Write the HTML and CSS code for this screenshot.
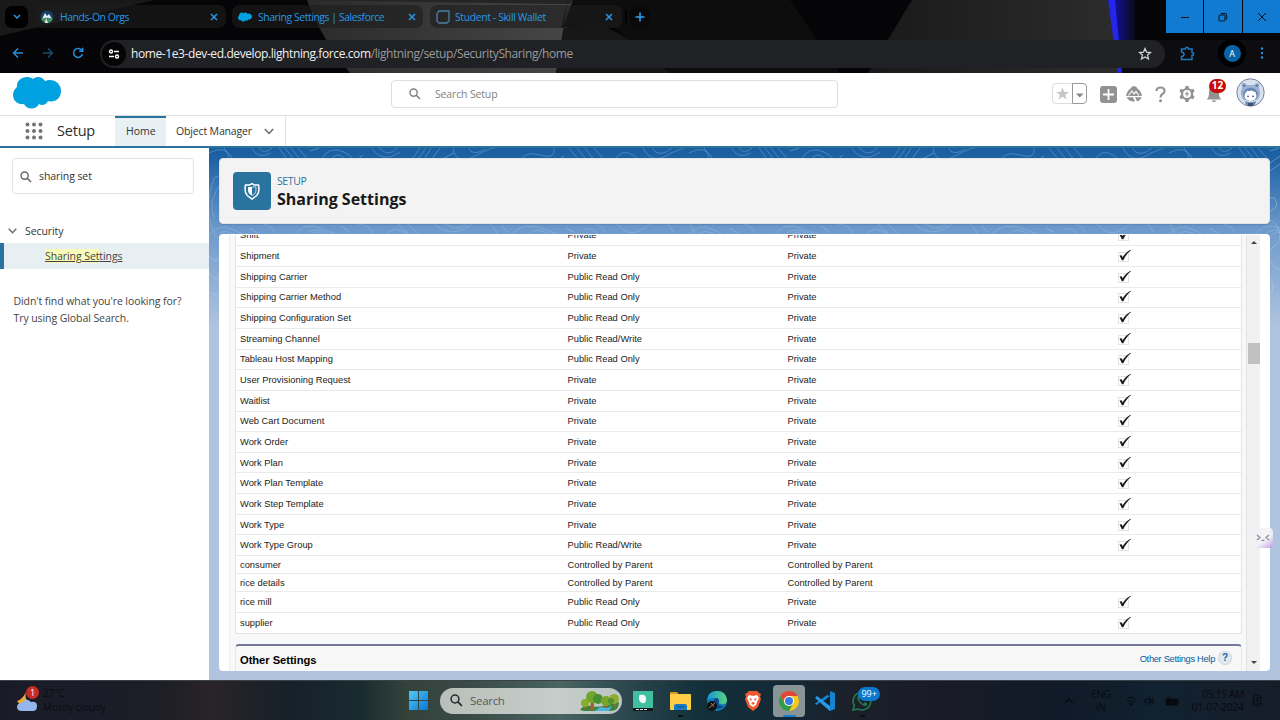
FILE: index.html
```html
<!DOCTYPE html>
<html lang="en">
<head>
<meta charset="utf-8">
<title>Sharing Settings | Salesforce</title>
<link rel="stylesheet" href="styles.css">
</head>
<body>
<svg class="defs" width="0" height="0">
  <symbol id="check" viewBox="0 0 16 16"><path d="M2.500 4.500V13.500H12.500V4.500Z" fill="none" stroke="#c9c9c9" stroke-dasharray="1 1"/><path d="M3.500 7.600L5.600 7.200L6.700 9.200C8.600 6 11 3.300 14.600 1.700L15 2.300C12 4.500 9.500 7.800 7.300 12.200L5.900 12.200Z" fill="#1c1c1c"/></symbol>
  <symbol id="cloud" viewBox="0 0 48 33"><path d="M4 11C3 3 13-2 20 3C23 0 29 0 32 5C40 2 48 7 48 15C48 23 41 27 35 25C33 29 29 30 26 28C23 34 14 34 11 28C4 29 0 24 0 19C0 15 2 13 4 11Z" fill="#00a1e0"/></symbol>
  <symbol id="x" viewBox="0 0 8 8"><path d="M1 1L7 7M7 1L1 7" fill="none" stroke="#2698e8" stroke-width="1.500"/></symbol>
  <symbol id="lens" viewBox="0 0 12 12"><circle cx="4.600" cy="4.600" r="3.600" fill="none" stroke="currentColor" stroke-width="1.400"/><path d="M7.300 7.300L11 11" stroke="currentColor" stroke-width="1.600"/></symbol>
</svg>

<header class="chrome">
  <svg class="chrome-art" width="1280" height="73" viewBox="0 0 1280 73">
    <defs><linearGradient id="gl"><stop offset="0" stop-color="#1010b0"/><stop offset="1" stop-color="#0c0a14"/></linearGradient>
    <linearGradient id="gm"><stop offset="0" stop-color="#2b2b2c"/><stop offset="1" stop-color="#464646"/></linearGradient>
    <linearGradient id="gr"><stop offset="0" stop-color="#191919"/><stop offset="1" stop-color="#2c2c2c"/></linearGradient></defs>
    <path d="M0 0H155L95 14L0 36Z" fill="#19191a"/>
    <path d="M307 0H573L556 73H350Q322 40 307 0Z" fill="url(#gm)"/>
    <path d="M307 0H573L570 4Q420 2 307 0Z" fill="#242425"/>
    <path d="M568 0L561 28L608 28L640 45L672 73H556Z" fill="#171718"/>
    <path d="M573 0H790L840 73H670L615 28L563 27Z" fill="#0d0d0e"/>
    <path d="M912 0H1108L1120 73H868L889 38Z" fill="url(#gr)"/>
    <path d="M1112 0H1135V40H1118Z" fill="url(#gl)"/>
    <path d="M1120 40H1280V73H1122Z" fill="#0d0c10"/>
    <path d="M1108 0H1115L1122 73H1118Z" fill="#2626ea"/>
  </svg>
  <div class="tabs">
    <div class="tab-menu"><svg width="8" height="6" viewBox="0 0 8 6"><path d="M1 1L4 4L7 1" fill="none" stroke="#2698e8" stroke-width="1.500"/></svg></div>
    <div class="tab tab-a">
      <svg class="fav" width="14" height="14" viewBox="0 0 14 14"><circle cx="7" cy="7" r="6.500" fill="#163f68"/><path d="M2 9L5 3L7 6L9 4L12 9Z" fill="#e8eff8"/><path d="M1 9Q7 6 13 9Q11 13 7 13T1 9" fill="#438a5e"/><path d="M6 8L8 13H5Z" fill="#efe9dc"/></svg>
      <span class="t1">Hands-On Orgs</span><svg class="close" width="8" height="8"><use href="#x"/></svg></div>
    <div class="tab tab-b"><svg class="fav" width="14" height="10"><use href="#cloud"/></svg><span class="t2">Sharing Settings | Salesforce</span><svg class="close" width="8" height="8"><use href="#x"/></svg></div>
    <div class="tab tab-c"><svg class="fav" width="14" height="14" viewBox="0 0 14 14"><path d="M3 1H13V11L11 13H3L1 11V4Z" fill="none" stroke="#4882a0" stroke-width="1.300"/><path d="M1 4V11L3 13" stroke="#665191" stroke-width="1.500" stroke-dasharray="2 1" fill="none"/></svg><span class="t3">Student - Skill Wallet</span><svg class="close" width="8" height="8"><use href="#x"/></svg></div>
    <div class="tab-sep"></div>
    <div class="new-tab"><svg width="10" height="10" viewBox="0 0 10 10"><path d="M5 .5V9.500M.5 5H9.500" stroke="#2aa0f4" stroke-width="1.600"/></svg></div>
    <div class="win-buttons">
      <div><svg width="10" height="10"><path d="M1 5.500H9" stroke="#06131d"/></svg></div>
      <div><svg width="10" height="10" viewBox="0 0 10 10" fill="none" stroke="#06131d"><rect x="1" y="3" width="6" height="6" rx="1"/><path d="M3 1.500H7Q8.700 1.500 8.700 3V7.500"/></svg></div>
      <div><svg width="10" height="10" viewBox="0 0 10 10"><path d="M1 1L9 9M9 1L1 9" stroke="#06131d"/></svg></div>
    </div>
  </div>
  <div class="toolbar">
    <svg width="12" height="12" viewBox="0 0 12 12" fill="none" stroke="#2590dc" stroke-width="1.400"><path d="M11 6H1.500M6 1.500L1.500 6L6 10.500"/></svg>
    <svg width="12" height="12" viewBox="0 0 12 12" fill="none" stroke="#174b70" stroke-width="1.400"><path d="M1 6H10.500M6 1.500L10.500 6L6 10.500"/></svg>
    <svg width="12" height="12" viewBox="0 0 12 12" fill="none" stroke="#2590dc" stroke-width="1.500"><path d="M10 3.600A4.500 4.500 0 1 0 10.500 7M10.700 .7V4.200H7.200"/></svg>
    <div class="omni">
      <div class="site-info"><svg width="12" height="10" viewBox="0 0 12 10" fill="none" stroke="#fff" stroke-width="1.400"><circle cx="3" cy="2.500" r="1.500"/><path d="M6 2.500H11M1 7.500H6"/><circle cx="9" cy="7.500" r="1.500"/></svg></div>
      <span class="url"><b>home-1e3-dev-ed.develop.lightning.force.com</b>/lightning/setup/SecuritySharing/home</span>
      <svg class="bookmark" width="14" height="14" viewBox="0 0 14 14"><path d="M7 1.600L8.600 5.200L12.500 5.500L9.600 8.100L10.500 12L7 9.900L3.500 12L4.400 8.100L1.500 5.500L5.400 5.200Z" fill="none" stroke="#d2d3d6" stroke-width="1.300"/></svg>
    </div>
    <svg class="puzzle" width="15" height="15" viewBox="0 0 15 15"><path d="M1.500 3H5.500Q5.500 1.300 7 1.300T8.500 3H12V6.500Q13.700 6.500 13.700 8T12 9.500V13.500H1.500V10.500Q4 10.300 4 8.300T1.500 6Z" fill="none" stroke="#1e79bd" stroke-width="1.500"/></svg>
    <div class="profile"><span>A</span></div>
    <svg class="kebab" width="4" height="12" fill="#2590dc"><circle cx="2" cy="1.500" r="1.200"/><circle cx="2" cy="6" r="1.200"/><circle cx="2" cy="10.500" r="1.200"/></svg>
  </div>
</header>

<div class="sf-header">
  <svg class="sf-logo" width="48" height="33"><use href="#cloud"/></svg>
  <div class="global-search"><svg width="12" height="12"><use href="#lens"/></svg><span>Search Setup</span></div>
  <div class="actions">
    <svg width="36" height="22" viewBox="0 0 36 22"><path d="M21 .5H4Q.5 .5 .5 4V17Q.5 20.500 4 20.500H21" fill="#fff" stroke="#ddd"/><path d="M10.500 4.500L12.200 9H17L13.200 11.800L14.600 16.500L10.500 13.700L6.400 16.500L7.800 11.800L4 9H8.800Z" fill="#c6c6c6"/><path d="M20.500 .5H31Q34.500 .5 34.500 4V17Q34.500 20.500 31 20.500H20.500Z" fill="#fff" stroke="#999"/><path d="M24 10.500H31.500L27.700 14.500Z" fill="#858585"/></svg>
    <svg class="i-plus" width="17" height="17" viewBox="0 0 17 17"><rect width="17" height="17" rx="3" fill="#929292"/><path d="M8.500 3V14M3 8.500H14" stroke="#fff" stroke-width="1.800"/></svg>
    <svg class="i-trail" width="16" height="16" viewBox="0 0 16 16"><path d="M0 10Q1 5 4 3Q6 0 8 0T12 3Q15 5 16 10Z" fill="#929292"/><path d="M2.500 9.500L6 5L8 8L10 5.500L13 9.500" fill="none" stroke="#fff" stroke-width="1.100"/><path d="M.5 11.300H7L9 15.500Q3 16 .5 11.300M9 11.300H15.500Q14 15 11 15.300Z" fill="#929292"/></svg>
    <svg class="i-help" width="11" height="17" viewBox="0 0 11 17"><path d="M1.500 5Q1.500 1.500 5.500 1.500T9.500 5Q9.500 7 7.500 8T5.500 11.500" fill="none" stroke="#929292" stroke-width="2.200"/><circle cx="5.500" cy="14.800" r="1.500" fill="#929292"/></svg>
    <svg class="i-gear" width="16" height="16" viewBox="0 0 16 16"><path d="M6.500 0H9.500L10 2.300L12 3.400L14.200 2.700L15.500 5.200L14 7V9L15.500 10.800L14.200 13.300L12 12.600L10 13.700L9.500 16H6.500L6 13.700L4 12.600L1.800 13.300L.5 10.800L2 9V7L.5 5.200L1.800 2.700L4 3.400L6 2.300Z" fill="#929292"/><circle cx="8" cy="8" r="3.900" fill="#fff"/><path d="M8.500 4.800L5.800 8.500H7.600L7 11.200L10.200 7.300H8.300Z" fill="#929292"/></svg>
    <div class="bell"><svg width="16" height="17" viewBox="0 0 16 17"><path d="M2 12Q3 10 3 6Q3 1 8 1T13 6Q13 10 14 12L15.500 13.500H.5ZM5.500 14.500H10.500Q8 18 5.500 14.500" fill="#929292"/></svg><span>12</span></div>
    <svg class="avatar" width="29" height="29" viewBox="0 0 29 29"><circle cx="14.500" cy="14.500" r="13.700" fill="#d8e2ef" stroke="#74849a"/><path d="M5.500 5.500Q8 3.500 11 7H18Q21 3.500 23.500 5.500L23 10Q26 16 21.500 22H7.500Q3 16 6 10Z" fill="#9db2d1"/><path d="M7 6.500L10 7.500L7.500 9ZM22 6.500L19 7.500L21.500 9Z" fill="#4b658b"/><ellipse cx="14.500" cy="16.500" rx="7.400" ry="6.800" fill="#6785b2"/><ellipse cx="14.500" cy="18" rx="6" ry="5" fill="#fff"/><path d="M9.500 15L11.500 12.500L13.500 13.500L15.500 12.200L17 13.500L19.500 14L20 17H9Z" fill="#fff"/><circle cx="12" cy="18.400" r=".8" fill="#31425c"/><circle cx="17" cy="18.400" r=".8" fill="#31425c"/><path d="M9 23Q14.500 25.500 20 23L19 27Q14.500 29 10 27Z" fill="#7189ab"/><path d="M12 25H17V28H12Z" fill="#3d5375"/></svg>
  </div>
</div>

<nav class="sf-nav">
  <svg class="waffle" width="18" height="18" fill="#747474"><circle cx="2.500" cy="2.500" r="2"/><circle cx="9" cy="2.500" r="2"/><circle cx="15.500" cy="2.500" r="2"/><circle cx="2.500" cy="9" r="2"/><circle cx="9" cy="9" r="2"/><circle cx="15.500" cy="9" r="2"/><circle cx="2.500" cy="15.500" r="2"/><circle cx="9" cy="15.500" r="2"/><circle cx="15.500" cy="15.500" r="2"/></svg>
  <span class="app-name">Setup</span>
  <div class="nav-home"><span>Home</span></div>
  <div class="nav-object"><span>Object Manager</span><svg width="10" height="7" viewBox="0 0 10 7"><path d="M.8 1L5 5.500L9.200 1" fill="none" stroke="#6b6b6b" stroke-width="1.500"/></svg></div>
</nav>

<div class="body">
  <aside class="side">
    <div class="quick-find"><svg width="12" height="12"><use href="#lens"/></svg><span>sharing set</span></div>
    <div class="tree-group"><svg width="9" height="6" viewBox="0 0 9 6"><path d="M.7 .8L4.500 4.800L8.300 .8" fill="none" stroke="#6b6b6b" stroke-width="1.400"/></svg><span>Security</span></div>
    <div class="tree-item"><span><mark>Sharing Set</mark>tings</span></div>
    <p class="hint"><span class="h1">Didn't find what you're looking for?</span><br><span class="h2">Try using Global Search.</span></p>
  </aside>
  <main class="main">
    <svg class="topo" width="1071" height="532" viewBox="0 0 1071 532">
      <defs><pattern id="contours" width="480" height="532" patternUnits="userSpaceOnUse"><g fill="none" stroke="#a9cbee" stroke-opacity=".36" stroke-width=".9">
        <path d="M0 5Q15-3 22 8T5 30Q-5 60 3 80T20 100M15 0Q28 15 13 34T5 70M43 0Q48 12 62 5M50 0Q55 7 63 0M70 0L84 20M76 0L90 18M82 0L96 18M89 0L101 14"/>
        <path d="M112 12Q120-3 135 4T140 18M121 14Q127 2 135 10M163 0Q173 16 191 4M170 0Q180 10 188 0M197 20L211 0M203 20L217 0M210 20L222 0M218 18L231 0"/>
        <path d="M244 0Q247 18 266 8T287 0M260 0Q263 9 276 1M309 16Q315 2 331 7T345 0M323 15Q327 8 336 14M360 0L373 16M368 0L380 15M376 0L388 16M385 0L396 13"/>
        <path d="M406 12Q412 0 424 7T422 18M434 0Q443 18 462 5L475 0M443 0Q450 11 463 0"/>
        <path d="M0 87Q10 74 25 82T38 85M10 86Q17 80 27 88M53 75Q66 79 66 88M85 88Q95 73 111 80T128 86M94 88Q105 76 120 87M102 88Q108 80 114 88M147 76Q160 75 165 88M175 88Q184 76 199 86M189 76L201 87M198 75L210 87"/>
        <path d="M225 76Q242 91 260 78T289 87M236 76Q249 84 257 76M303 86Q315 73 335 81T354 87M320 86Q328 78 341 87M369 76Q390 71 397 85M374 82Q386 78 389 88M408 76Q421 92 438 78T464 84"/>
      </g><path d="M101 3L110 0M148 12L154 7M233 11L245 5M345 15L355 8M465 17L475 10M40 80L49 85M132 78L140 84M292 78L299 84M357 80L365 84" stroke="#a9cbee" stroke-opacity=".4"/></pattern></defs>
      <rect width="1071" height="90" fill="url(#contours)"/>
      <g fill="none" stroke="#c5dcf3" stroke-opacity=".35"><path d="M1061 15L1071 8M1061 23L1071 16M1061 50H1065Q1071 57 1064 62L1061 63M1061 72Q1072 77 1071 93L1061 102M1061 112Q1069 125 1071 120M1061 130Q1067 140 1061 146M0 108Q7 115 10 111M0 125Q7 135 10 128M0 144L10 149"/></g>
    </svg>
    <section class="page-head">
      <div class="head-icon"><svg width="18" height="18" viewBox="0 0 18 18"><path d="M9 1.700L11.300 3H15.500Q17 10 13.800 13.500L9 17L4.200 13.500Q1 10 2.500 3H6.700Z" fill="none" stroke="#fff" stroke-width="1.500"/><path d="M9 5H5Q4.500 10 6.500 12L9 13.700Z" fill="#fff"/><path d="M9 5H13Q13.500 10 11.500 12L9 13.700" fill="none" stroke="#fff" stroke-width=".7"/></svg></div>
      <div class="head-text"><div class="eyebrow"><span>SETUP</span></div><h1><span>Sharing Settings</span></h1></div>
    </section>
    <section class="frame">
      <div class="sheet">
        <div class="table">
          <div class="row"><span>Shift</span><span>Private</span><span>Private</span><svg><use href="#check"/></svg></div>
          <div class="row"><span>Shipment</span><span>Private</span><span>Private</span><svg><use href="#check"/></svg></div>
          <div class="row"><span>Shipping Carrier</span><span>Public Read Only</span><span>Private</span><svg><use href="#check"/></svg></div>
          <div class="row"><span>Shipping Carrier Method</span><span>Public Read Only</span><span>Private</span><svg><use href="#check"/></svg></div>
          <div class="row"><span>Shipping Configuration Set</span><span>Public Read Only</span><span>Private</span><svg><use href="#check"/></svg></div>
          <div class="row"><span>Streaming Channel</span><span>Public Read/Write</span><span>Private</span><svg><use href="#check"/></svg></div>
          <div class="row"><span>Tableau Host Mapping</span><span>Public Read Only</span><span>Private</span><svg><use href="#check"/></svg></div>
          <div class="row"><span>User Provisioning Request</span><span>Private</span><span>Private</span><svg><use href="#check"/></svg></div>
          <div class="row"><span>Waitlist</span><span>Private</span><span>Private</span><svg><use href="#check"/></svg></div>
          <div class="row"><span>Web Cart Document</span><span>Private</span><span>Private</span><svg><use href="#check"/></svg></div>
          <div class="row"><span>Work Order</span><span>Private</span><span>Private</span><svg><use href="#check"/></svg></div>
          <div class="row"><span>Work Plan</span><span>Private</span><span>Private</span><svg><use href="#check"/></svg></div>
          <div class="row"><span>Work Plan Template</span><span>Private</span><span>Private</span><svg><use href="#check"/></svg></div>
          <div class="row"><span>Work Step Template</span><span>Private</span><span>Private</span><svg><use href="#check"/></svg></div>
          <div class="row"><span>Work Type</span><span>Private</span><span>Private</span><svg><use href="#check"/></svg></div>
          <div class="row"><span>Work Type Group</span><span>Public Read/Write</span><span>Private</span><svg><use href="#check"/></svg></div>
          <div class="row short"><span>consumer</span><span>Controlled by Parent</span><span>Controlled by Parent</span></div>
          <div class="row short"><span>rice details</span><span>Controlled by Parent</span><span>Controlled by Parent</span></div>
          <div class="row"><span>rice mill</span><span>Public Read Only</span><span>Private</span><svg><use href="#check"/></svg></div>
          <div class="row"><span>supplier</span><span>Public Read Only</span><span>Private</span><svg><use href="#check"/></svg></div>
        </div>
        <div class="other"><h2>Other Settings</h2><span class="help">Other Settings Help</span><span class="help-badge">?</span></div>
      </div>
      <div class="scrollbar"><i class="up"></i><i class="thumb"></i><i class="down"></i></div>
    </section>
    <div class="widget"><svg width="14" height="8" viewBox="0 0 14 8" fill="none" stroke="#858292" stroke-width="1.300"><path d="M1 1L4 3.500L1 6M13 1L10 3.500L13 6M5.500 6Q7 7 8.500 6"/></svg></div>
  </main>
</div>

<footer class="taskbar">
  <div class="weather">
    <div class="w-icon"><svg width="21" height="22" viewBox="0 0 21 22"><path d="M9 1Q5 9 0 10Q5 18 12 11Q7 8 9 1" fill="#efaa3b"/><path d="M5 20Q0 20 0 16T5 12Q9 6 14 11Q20 10 20 15T16 20Z" fill="#93b7ed"/></svg><span>1</span></div>
    <div class="w-text"><div><span>27°C</span></div><div><span class="cloudy">Mostly cloudy</span></div></div>
  </div>
  <svg class="start" width="19" height="19" viewBox="0 0 19 19"><defs><linearGradient id="win" x2="1" y2="1"><stop stop-color="#51c8f5"/><stop offset="1" stop-color="#0878d5"/></linearGradient></defs><path d="M0 0H9V9H0ZM10 0H19V9H10ZM0 10H9V19H0ZM10 10H19V19H10Z" fill="url(#win)"/></svg>
  <div class="task-search"><svg width="13" height="13"><use href="#lens"/></svg><span>Search</span>
    <svg class="trees" width="40" height="20" viewBox="0 0 40 20"><path d="M0 19Q4 13 11 15T27 14L39 11Q39 20 30 20H4Z" fill="#3b843d"/><path d="M15 20L20 16L27 17L32 15L29 20Z" fill="#49b5de"/><path d="M11 9L10 19H14V9M23 11L25 17H28V9M34 9V16H36V9M4 12V18H6V12" fill="#99652d"/><circle cx="12" cy="6" r="6" fill="#70a52b"/><circle cx="18" cy="8" r="5" fill="#499032"/><circle cx="5" cy="12" r="4" fill="#8bad2c"/><circle cx="26" cy="10" r="5" fill="#79a62a"/><circle cx="34" cy="8" r="5" fill="#8fac31"/><circle cx="31" cy="10" r="3" fill="#4d9230"/></svg></div>
  <div class="apps">
    <svg viewBox="0 0 20 20" width="20" height="20"><path d="M0 0H20V17H0Z" fill="#40bfa0"/><path d="M0 17H20V20H0Z" fill="#101818"/><path d="M8 4Q13 3 13 8T9 12Q6 11 6 7T8 4" fill="#f4faf8"/><path d="M3 18.500H15" stroke="#ddd" stroke-dasharray="3 1"/></svg>
    <div class="app"><svg viewBox="0 0 21 20" width="21" height="20"><path d="M0 2Q0 1 1 1H7L9 4H0Z" fill="#d89b20"/><rect y="3" width="21" height="16" rx="1" fill="#fdcd45"/><path d="M4 19V15Q4 13 6 13H15Q17 13 17 15V19Z" fill="#1879c4"/><path d="M7 16H14" stroke="#0d4f87"/></svg><i></i></div>
    <svg viewBox="0 0 20 20" width="20" height="20"><defs><linearGradient id="edge"><stop stop-color="#1793dc"/><stop offset="1" stop-color="#59d777"/></linearGradient></defs><circle cx="10" cy="10" r="10" fill="#137bbd"/><path d="M0 9Q1 0 10 0T20 9Q20 14 14 13Q10 12 12 9Q6 5 0 9" fill="url(#edge)"/><path d="M7 8Q12 5 12 11Q9 15 17 15Q12 20 7 16Z" fill="#0d4a83"/><circle cx="5" cy="15" r="5" fill="#111"/><path d="M2 17L8 12M4 12L7 16" stroke="#a1806a"/></svg>
    <svg viewBox="0 0 18 20" width="18" height="20"><path d="M5 0H13L15 2L17 3L16 6L17 8L14 16L9 20L4 16L1 8L2 6L1 3L3 2Z" fill="#f15930"/><path d="M5 4L9 5L13 4L15 7L13 11L12 14L9 16L6 14L5 11L3 7Z" fill="#fff"/><path d="M5 7L8 8L7 10ZM13 7L10 8L11 10ZM7 12L9 11L11 12L9 14Z" fill="#ec532b"/></svg>
    <div class="app active"><svg viewBox="0 0 20 20" width="20" height="20"><circle cx="10" cy="10" r="10" fill="#fac915"/><path d="M1.300 5A10 10 0 0 1 18.700 5H10A5 5 0 0 0 5.700 12.500Z" fill="#df4838"/><path d="M1.300 5L5.700 12.500A5 5 0 0 0 14.300 12.500L10 20A10 10 0 0 1 1.300 5Z" fill="#2e9c4b"/><circle cx="10" cy="10" r="5" fill="#fff"/><circle cx="10" cy="10" r="4" fill="#397ae4"/></svg><i></i></div>
    <svg viewBox="0 0 20 20" width="20" height="20"><path d="M15 0L20 2V18L15 20L5 11L2 14L0 12.500L12 4L15 5Z" fill="#1684d0"/><path d="M0 7L2 5L15 15V20Z" fill="#2999e8"/><path d="M15 5V15L8.500 10Z" fill="#17222c"/></svg>
    <div class="app whatsapp"><svg viewBox="0 0 20 20" width="20" height="20"><path d="M1 19L2.300 14.500A8.800 8.800 0 1 1 6 18Z" fill="none" stroke="#237a50" stroke-width="1.600"/><path d="M6 5Q4 7 7 11T14 15Q17 13 13 11L11 13Q8 11 7 8L8 7Q7 4 6 5" fill="#237a50"/></svg><span>99+</span><i></i></div>
  </div>
  <div class="tray">
    <svg class="chev" width="10" height="6"><path d="M1 5L5 1L9 5" fill="none" stroke="#080a0f" stroke-width="1.200"/></svg>
    <div class="lang"><span>ENG</span><br><span>IN</span></div>
    <svg class="wifi" width="12" height="10" viewBox="0 0 12 10" fill="none" stroke="#080a0f"><path d="M1 4Q6-1 11 4M3 6Q6 3 9 6"/><circle cx="6" cy="8" r="1" fill="#080a0f"/></svg>
    <svg class="sound" width="10" height="10" viewBox="0 0 10 10" fill="none" stroke="#080a0f"><path d="M1 3.500H3L5.500 1V9L3 6.500H1ZM7 3Q8.500 5 7 7M8.300 1.500Q10.500 5 8.300 8.500"/></svg>
    <svg class="battery" width="14" height="10" viewBox="0 0 14 10"><path d="M1 3H12V9H1ZM12 5H14V7H12M3 0V4" fill="#080a0f" stroke="#080a0f"/></svg>
    <div class="clock"><span class="time">05:15 AM</span><br><span class="date">01-07-2024</span></div>
    <svg class="notif" width="12" height="13" viewBox="0 0 12 13" fill="none" stroke="#080a0f"><path d="M1 10H11L9.500 8V4Q9.500 1 6 1T2.500 4V8ZM4 12H8M4.500 4H7.500L4.500 7H7.500"/></svg>
  </div>
</footer>
</body>
</html>
```
FILE: styles.css
```css
* { box-sizing: border-box; }
body { margin: 0; width: 1280px; height: 720px; overflow: hidden; display: flex; flex-direction: column; font-family: "Open Sans", "Noto Sans", sans-serif; font-size: 10.5px; color: #333; background: #fff; }
svg { flex: none; display: block; }
.defs { position: absolute; }
span { white-space: nowrap; }

.chrome { position: relative; height: 73px; flex: none; background: #050507; overflow: hidden; }
.chrome-art { position: absolute; inset: 0; }
.tabs { position: relative; height: 33px; display: flex; align-items: center; color: #2698e8; font-size: 10.4px; letter-spacing: -.43px; }
.tab-menu { width: 23px; height: 22px; margin-left: 5px; border-radius: 7px; background: #000; display: grid; place-items: center; }
.tab { height: 23px; display: flex; align-items: center; border-radius: 7px; background: rgba(28,28,29,.6); }
.tab-a { width: 192px; margin-left: 6px; padding-left: 6px; }
.tab-b { width: 191px; margin-left: 6px; padding-left: 6px; }
.tab-c { width: 192px; margin-left: 7px; padding-left: 6px; }
.tab span { margin-left: 6px; }
.tab .t3 { margin-left: 5px; letter-spacing: -.36px; }
.close { margin-left: auto; margin-right: 8px; }
.tab-b .close { margin-right: 7px; }
.tab-c .close { margin-right: 9px; }
.tab-sep { width: 2px; height: 13px; margin-left: 3px; background: #000; }
.new-tab { width: 22px; height: 22px; margin-left: 2px; border-radius: 50%; background: rgba(0,0,0,.3); display: grid; place-items: center; }
.win-buttons { align-self: stretch; margin-left: auto; display: grid; grid-template-columns: 37px 38px 37px; gap: 1px; }
.win-buttons div { display: grid; place-items: center; background: #107bd0; }
.toolbar { position: relative; height: 40px; display: flex; align-items: center; padding-left: 12px; gap: 18px; }
.omni { width: 1065px; height: 28px; margin-left: 2px; margin-top: 1px; display: flex; align-items: center; border-radius: 14px; background: #202124; color: #9a9b9e; font-size: 12px; }
.toolbar > svg:nth-child(3) { margin-right: -4px; }
.site-info { width: 24px; height: 24px; margin-left: 2px; border-radius: 50%; background: #050505; display: grid; place-items: center; }
.url { margin-left: 5px; letter-spacing: -.4px; }
.url b { font-weight: 400; color: #f0f0f0; }
.bookmark { margin-left: auto; margin-right: 13px; }
.puzzle { margin-left: -3px; }
.profile { width: 28px; height: 28px; border-radius: 50%; background: #000; display: grid; place-items: center; margin-left: 5px; }
.profile span { width: 17px; height: 17px; border-radius: 50%; background: #0864a7; color: #fff; font-size: 9px; line-height: 17px; text-align: center; }
.kebab { margin-left: -4px; }

.sf-header { height: 43px; flex: none; display: flex; align-items: center; border-bottom: 1px solid #ddd; }
.sf-logo { margin: -3px 0 0 13px; }
.global-search { width: 447px; height: 28px; margin-left: 330px; padding-left: 17px; border: 1px solid #ddd; border-radius: 4px; display: flex; align-items: center; gap: 14px; color: #818181; margin-top: -1px; letter-spacing: -.15px; }
.actions { flex: 1; display: flex; align-items: center; padding-left: 214px; }
.i-plus { margin-left: 12px; }
.i-trail { margin-left: 9px; }
.i-help { margin-left: 13px; }
.i-gear { margin-left: 13px; }
.bell { position: relative; margin-left: 11px; }
.bell span { position: absolute; left: 3px; top: -7px; height: 14px; width: 17px; border-radius: 7px; background: #c40d08; color: #fff; font-size: 10px; font-weight: 700; line-height: 13px; text-align: center; }
.avatar { margin: -4px 0 0 14px; }

.sf-nav { height: 32px; flex: none; display: flex; border-bottom: 2px solid #2a739e; align-items: stretch; }
.waffle { margin: 5.5px 0 0 24.5px; }
.app-name { margin-left: 14.5px; width: 58px; font-size: 14.5px; line-height: 30px; letter-spacing: -.2px; color: #2b2b2b; }
.nav-home { width: 51px; border-top: 2px solid #2a739e; background: #e9f0f3; line-height: 27px; padding-left: 11px; }
.nav-object { width: 120px; border-right: 1px solid #e2e2e2; padding-left: 10px; line-height: 30px; display: flex; align-items: center; gap: 12px; letter-spacing: -.15px; }

.body { height: 532px; flex: none; display: flex; }
.side { width: 209px; flex: none; background: #fff; letter-spacing: -.08px; }
.quick-find { width: 182px; height: 36px; margin: 10px 0 0 12px; padding-left: 7px; border: 1px solid #e3e3e3; border-radius: 4px; display: flex; align-items: center; gap: 7px; color: #666; }
.quick-find svg { margin-top: 2px; }
.quick-find span { color: #333; }
.tree-group { height: 22px; margin-top: 26px; padding-left: 8px; display: flex; align-items: center; gap: 8px; }
.tree-group span { margin-top: -1px; }
.tree-item { height: 26px; margin-top: 1px; padding-left: 41px; border-left: 4px solid #2a739e; background: #e8eff2; line-height: 27px; text-decoration: underline; color: #444; }
.tree-item mark { color: inherit; background: #f9fbb8; }
.hint { margin: 24px 0 0 13.5px; line-height: 17px; color: #444; }

.main { position: relative; width: 1071px; background: linear-gradient(#195e9f 0, #1f63a6 12px, #6e9acb 82px, #b0c4df 180px); padding: 10px 10px 9px; display: flex; flex-direction: column; gap: 10px; }
.topo { position: absolute; left: 0; top: 0; }
.page-head { position: relative; height: 66px; flex: none; padding: 13px; display: flex; border: 1px solid #e4e4e4; border-radius: 4px; background: #f3f3f3; gap: 6px; box-shadow: 0 1px 1px rgba(0,0,0,.1); }
.head-icon { width: 38px; height: 38px; border-radius: 4px; background: #2a739e; display: grid; place-items: center; }
.head-text { padding-top: 1px; }
.eyebrow { color: #2a739e; font-size: 10.5px; letter-spacing: -.4px; line-height: 17px; }
h1 { margin: 0; color: #181818; font-size: 16px; line-height: 19px; font-weight: 700; }
.frame { position: relative; height: 437px; flex: none; background: #fff; border-radius: 4px; padding: 1px 10px 0; display: flex; overflow: hidden; }
.sheet { width: 1018px; height: 436px; padding-left: 5px; border-left: 1px solid #eee; border-right: 1px solid #e1e4e4; background: #f8f8f8; overflow: hidden; font-family: "Liberation Sans", Arial, sans-serif; font-size: 9.33px; color: #222; }
.table { width: 1007px; margin-top: -9.4px; border: 1px solid #e4e4e4; border-top: 0; border-radius: 0 0 3px 3px; background: #fff; }
.row { height: 20.67px; border-bottom: 1px solid #e9eaea; display: grid; grid-template-columns: 327.500px 220px 327.500px 1fr; padding-left: 4px; align-items: center; }
.row.short { height: 18px; }
.row:last-child { border-bottom: 0; height: 20.5px; }
.row svg { width: 16px; height: 16px; margin-left: 1px; }
.other { width: 1007px; height: 40px; margin-top: 10px; border-top: 2px solid #75789a; border-left: 1px solid #e8e8e8; border-right: 1px solid #e8e8e8; border-radius: 4px 4px 0 0; display: flex; align-items: center; padding: 0 10px 12px 4px; color: #075c9e; }
.help { letter-spacing: -.32px; }
h2 { margin: 2px auto 0 0; color: #000; font-size: 11.2px; letter-spacing: -.05px; font-weight: 700; }
.help-badge { width: 12px; height: 12px; margin: -2px 0 0 4px; border-radius: 50%; background: #e2eaf0; box-shadow: 0 0 1px 1px #cbd5dc; color: #1868ad; font-weight: 700; font-size: 10px; line-height: 12px; text-align: center; }
.scrollbar { width: 13px; background: #f1f1f1; display: flex; flex-direction: column; align-items: center; padding: 5px 0 7px; }
.up, .down { width: 0; height: 0; border: 3px solid transparent; }
.up { border-bottom-color: #444; border-top: 0; margin-top: 1px; }
.down { border-top-color: #444; border-bottom: 0; margin-top: auto; }
.thumb { width: 12px; height: 21px; margin-top: 99px; background: #c1c1c1; }
.widget { position: absolute; right: 7px; top: 380px; width: 20px; height: 20px; border-radius: 4px; background: linear-gradient(145deg, #f3f3f7 60%, #bf95e5); display: grid; place-items: center; opacity: .9; }

.taskbar { height: 40px; flex: none; display: flex; align-items: center; border-top: 1px solid #3a4248; background: linear-gradient(90deg, #1a1b28 0, #1b1d27 150px, #292427 212px, #162029 290px, #192b30 360px, #33433b 407px, #394844 460px, #496461 560px, #29434c 635px, #123039 700px, #142936 790px, #1b2029 850px, #191b27 940px, #101a28 1060px, #112230 1160px, #171c29 1280px); }
.weather { width: 408px; display: flex; padding-left: 17px; color: #0a0c12; font-size: 10px; line-height: 14px; letter-spacing: -.1px; margin-top: -2px; }
.w-icon { position: relative; width: 26px; padding-top: 5px; }
.w-icon span { position: absolute; left: 9px; top: 0; width: 13px; height: 13px; border-radius: 50%; background: #c92c23; color: #fff; font-size: 9px; line-height: 13px; text-align: center; }
.start { margin-left: 1px; }
.task-search { width: 182px; height: 26px; margin-left: 12px; padding: 0 2px 0 10px; border-radius: 13px; background: linear-gradient(90deg, #b9bfba, #c6cdca 65%, #bbc6c5); display: flex; align-items: center; color: #252b2b; font-size: 11.500px; letter-spacing: -.3px; }
.task-search span { margin-left: 7px; color: #555b5b; }
.trees { margin: 1px 0 0 auto; }
.apps { width: 254px; margin-left: 11px; display: flex; align-items: center; gap: 16.7px; }
.app { position: relative; }
.app i { position: absolute; left: 8px; bottom: -6px; width: 5px; height: 2px; background: #080d12; border-radius: 1px; }
.app.active { width: 32px; height: 32px; margin: 0 -6px; background: #899497; border-radius: 4px; display: grid; place-items: center; }
.app.active i { left: 10px; bottom: 0; width: 13px; background: #1580cd; }
.whatsapp span { position: absolute; left: 6px; top: -4px; width: 22px; height: 14px; background: #0877cd; border-radius: 7px; color: #fff; font-size: 9px; line-height: 14px; text-align: center; }
.tray { flex: 1; display: flex; align-items: center; color: #080a0f; font-size: 10px; line-height: 13px; }
.chev { margin-left: 177px; }
.lang { width: 30px; margin-left: 12px; text-align: center; letter-spacing: -.2px; }
.wifi { margin-left: 9px; }
.sound { margin-left: 7px; }
.battery { margin-left: 11px; }
.clock { width: 65px; margin-left: 0; text-align: right; }
.time { letter-spacing: -.2px; }
.notif { margin-left: 7px; }
```
